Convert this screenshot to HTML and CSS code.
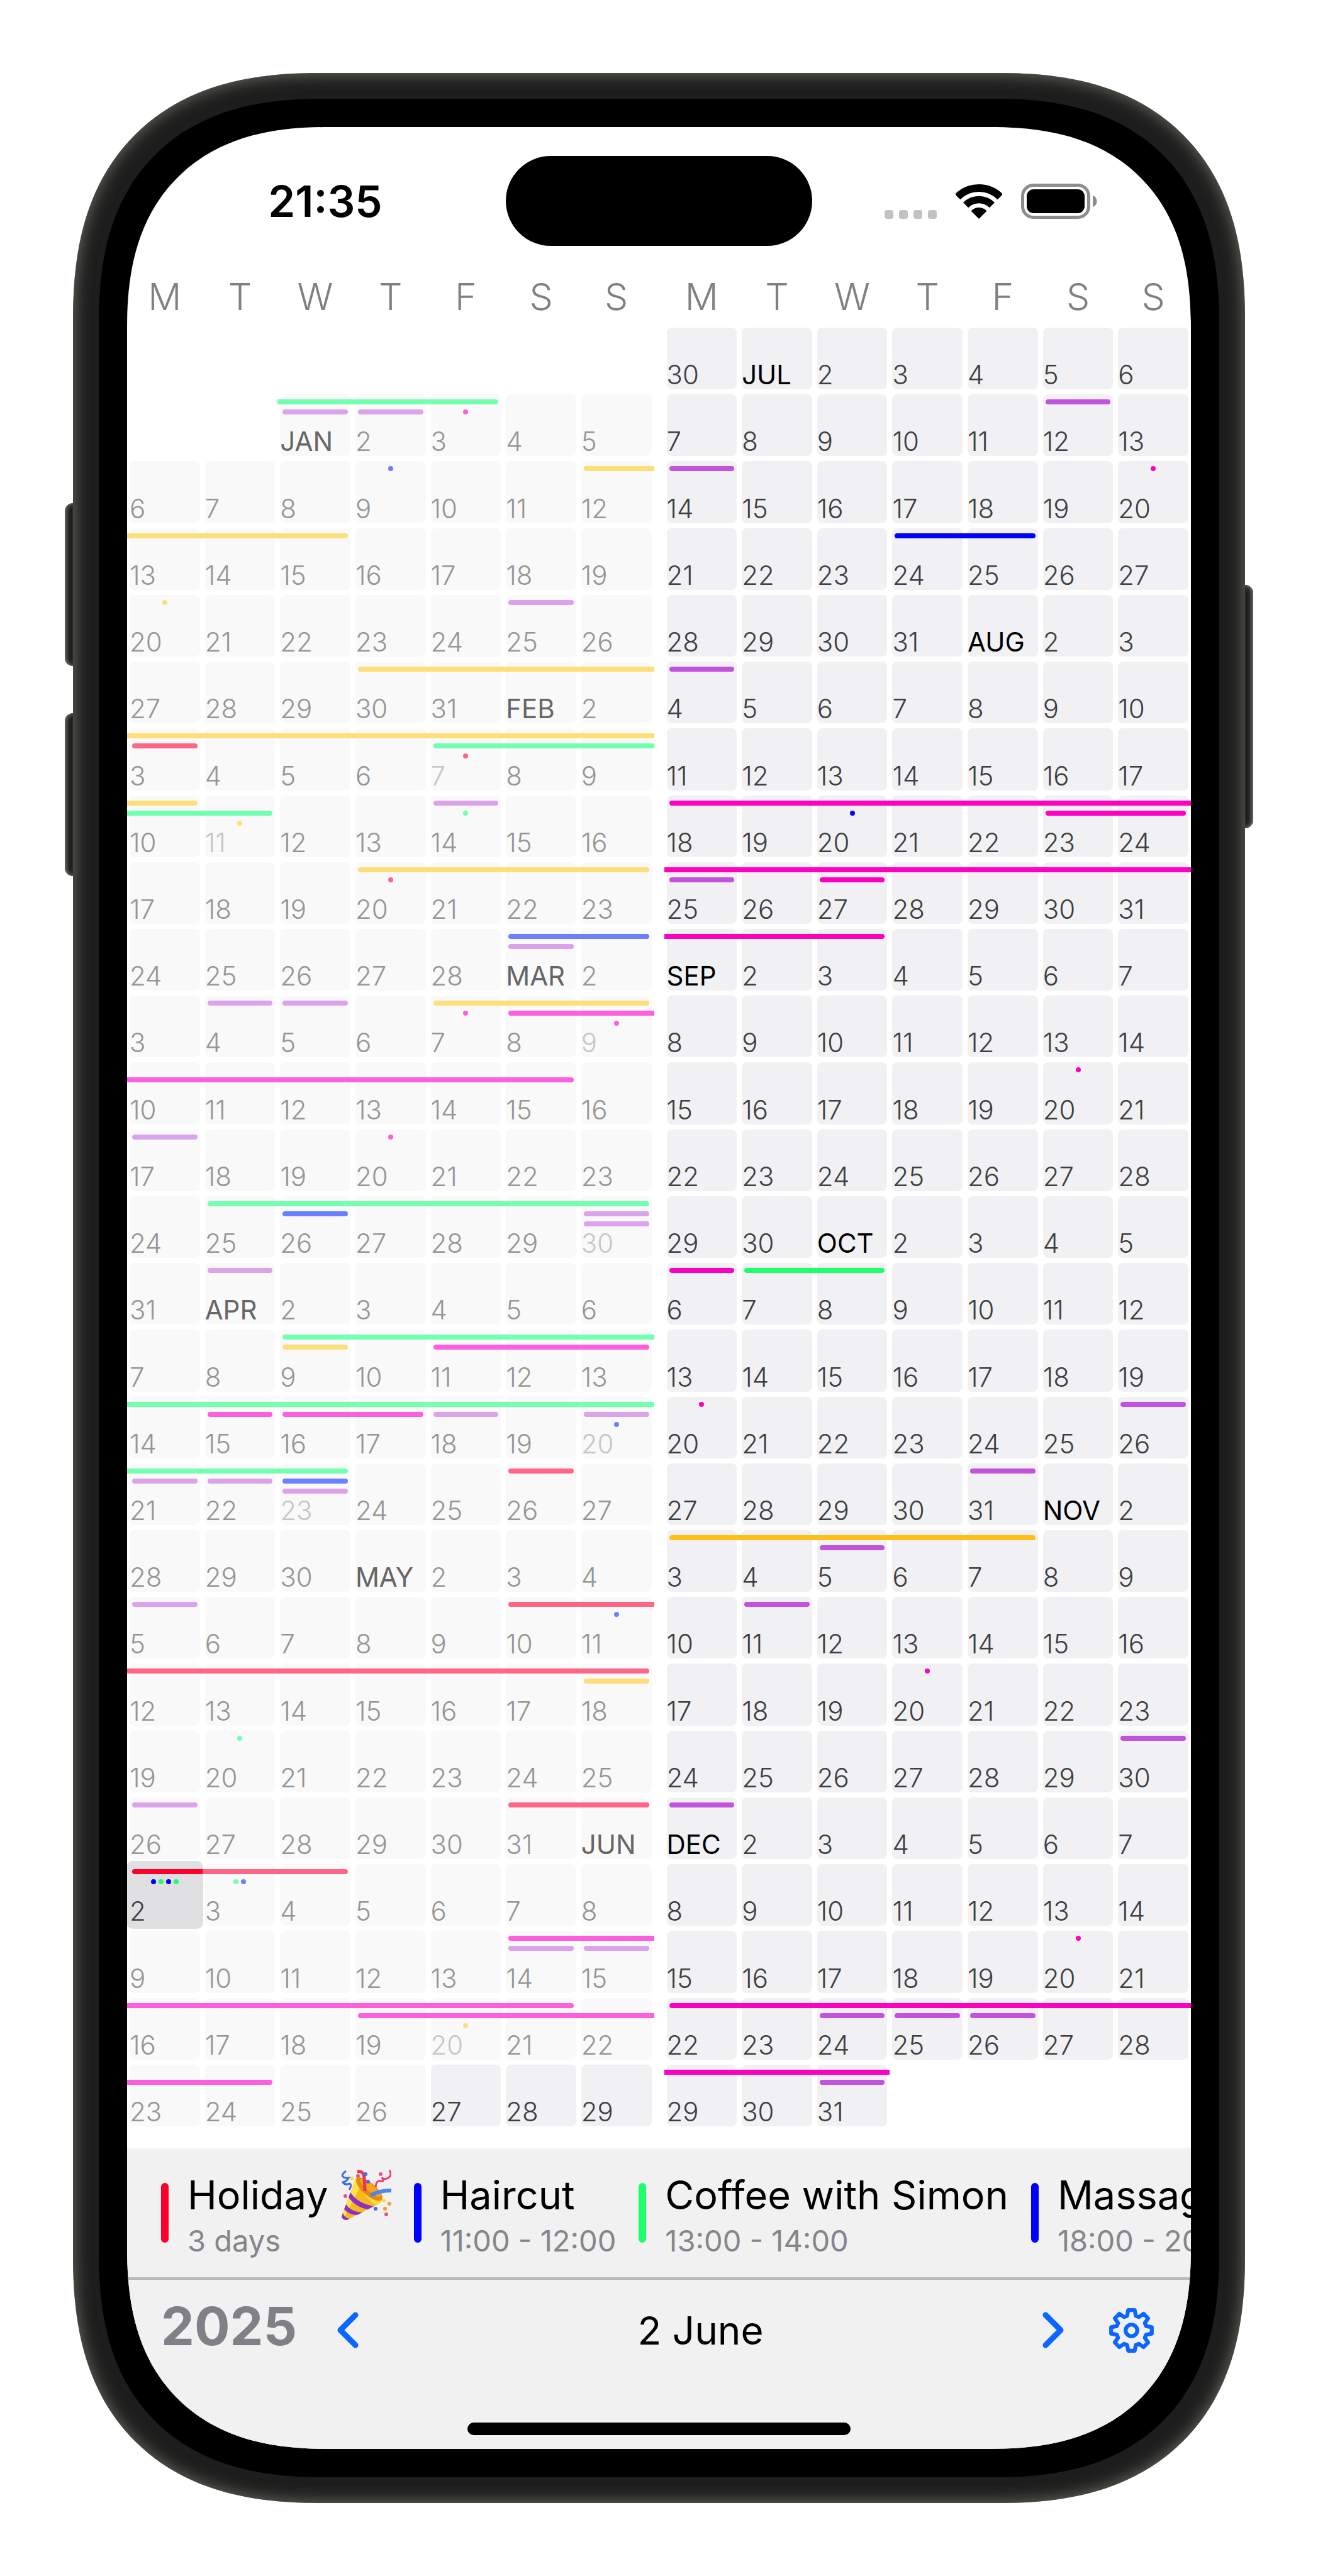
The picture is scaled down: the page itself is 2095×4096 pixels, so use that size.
FILE: index.html
```html
<!DOCTYPE html>
<html lang="en">
<head>
<meta charset="utf-8">
<meta name="viewport" content="width=device-width, initial-scale=1">
<title>Year calendar</title>
<link rel="stylesheet" href="styles.css">
</head>
<body>
<main class="phone">
  <span class="side-key volume-up"></span>
  <span class="side-key volume-down"></span>
  <span class="side-key power"></span>
  <div class="bezel">
    <div class="screen">
      <header class="status-bar">
        <time class="clock">21:35</time>
        <span class="island"></span>
        <div class="status-icons">
          <span class="signal"><i></i><i></i><i></i><i></i></span>
          <svg class="wifi" viewBox="0 0 74 55" role="img" aria-label="Wi-Fi">
            <path d="M3.1 20.1A48 48 0 0 1 70.9 20.1" fill="none" stroke="#000" stroke-width="12"/>
            <path d="M16.1 33.1A29.5 29.5 0 0 1 57.9 33.1" fill="none" stroke="#000" stroke-width="11.5"/>
            <path d="M26 42.5A16 16 0 0 1 48 42.5L37 53.5Z" stroke="#000" stroke-width="2" stroke-linejoin="round"/>
          </svg>
          <svg class="battery" viewBox="0 0 121 56" role="img" aria-label="Battery full">
            <rect x="2.5" y="2.5" width="105" height="51" rx="17" fill="none" stroke="#8d8d8d" stroke-width="5"/>
            <rect x="9" y="9" width="92" height="38" rx="11"/>
            <path d="M114 19C118 20 120.500 24 120.500 28S118 36 114 37Z" fill="#8d8d8d"/>
          </svg>
        </div>
      </header>

      <section class="year" aria-label="2025">
        <table class="half" id="first-half">
          <thead><tr><th>M</th><th>T</th><th>W</th><th>T</th><th>F</th><th>S</th><th>S</th></tr></thead>
          <tbody></tbody>
        </table>
        <table class="half" id="second-half">
          <thead><tr><th>M</th><th>T</th><th>W</th><th>T</th><th>F</th><th>S</th><th>S</th></tr></thead>
          <tbody></tbody>
        </table>
      </section>

      <ul class="agenda">
        <li class="event">
          <span class="accent red"></span>
          <div>
            <h2>Holiday<svg class="popper" viewBox="0 0 80 80" role="img" aria-label="party popper">
              <path d="M23 14C16 34 8 55 1 74Q2 81 11 79Q38 66 62 53Q68 48 61 38Q48 18 31 13Q26 11 23 14Z" fill="#f5b91f"/>
              <path d="M23 14C16 34 8 55 1 74L4 78Q18 52 32 24Z" fill="#ffe04a"/>
              <path d="M30 25Q40 48 56 56L62 53Q66 50 64 46Q44 46 30 25Z" fill="#ffd83c"/>
              <ellipse cx="45" cy="31" rx="26" ry="10" transform="rotate(40 45 31)" fill="#e58a0c"/>
              <ellipse cx="47" cy="29" rx="21" ry="6" transform="rotate(40 47 29)" fill="#f7a51c"/>
              <path d="M15 36L12 44Q24 60 43 63L52 58Q27 54 15 36Z" fill="#8a2fc9"/>
              <path d="M8 55L5 63Q13 72 26 72L34 68Q16 67 8 55Z" fill="#8a2fc9"/>
              <path d="M3 69L1 75Q3 80 9 80L14 78Q6 77 3 69Z" fill="#8a2fc9"/>
              <path d="M26 3Q36 1 37 13T38 34" fill="none" stroke="#f0304f" stroke-width="5"/>
              <path d="M8 2Q0 8 3 11T12 13Q9 19 3 20Q6 25 14 22Q18 24 13 32" fill="none" stroke="#3a6bea" stroke-width="3"/>
              <path d="M77 1Q82 9 75 13T65 12Q70 20 63 18T55 28" fill="none" stroke="#ef3c6c" stroke-width="3"/>
              <path d="M47 41Q60 33 80 33" fill="none" stroke="#4b86f0" stroke-width="6"/>
              <g fill="#ffd93b"><circle cx="17" cy="14" r="3"/><circle cx="68" cy="49" r="3"/></g>
              <g fill="#f59a2d"><circle cx="77" cy="54" r="3"/><circle cx="70" cy="62" r="3"/></g>
              <g fill="#3a6bea"><circle cx="39" cy="7" r="3"/><circle cx="43" cy="19" r="3"/><circle cx="55" cy="62" r="3"/></g>
              <g fill="#ef4f83"><circle cx="7" cy="42" r="3"/><circle cx="27" cy="10" r="3"/><circle cx="63" cy="7" r="3"/><circle cx="72" cy="71" r="3"/></g>
            </svg></h2>
            <p>3 days</p>
          </div>
        </li>
        <li class="event">
          <span class="accent blue"></span>
          <div><h2>Haircut</h2><p>11:00 - 12:00</p></div>
        </li>
        <li class="event">
          <span class="accent green"></span>
          <div><h2>Coffee with Simon</h2><p>13:00 - 14:00</p></div>
        </li>
        <li class="event">
          <span class="accent blue"></span>
          <div><h2>Massage</h2><p>18:00 - 20:00</p></div>
        </li>
      </ul>

      <footer class="toolbar">
        <div class="controls">
          <button class="year-button" type="button">2025</button>
          <button class="icon-button" type="button" aria-label="Previous day">
            <svg class="chevron" viewBox="0 0 34 58"><path d="M29 5L5 29L29 53"/></svg>
          </button>
          <h1 class="current">2 June</h1>
          <button class="icon-button" type="button" aria-label="Next day">
            <svg class="chevron" viewBox="0 0 34 58"><path d="M5 5L29 29L5 53"/></svg>
          </button>
          <button class="icon-button settings" type="button" aria-label="Settings">
            <svg class="gear" viewBox="-165 -165 330 330">
              <path d="M-32-108L-24-150H24L32-108L54-99L89-123L123-89L99-54L108-32L150-24V24L108 32L99 54L123 89L89 123L54 99L32 108L24 150H-24L-32 108L-54 99L-89 123L-123 89L-99 54L-108 32L-150 24V-24L-108-32L-99-54L-123-89L-89-123L-54-99Z"/>
              <circle r="43"/>
            </svg>
          </button>
        </div>
        <span class="home-indicator"></span>
      </footer>
    </div>
  </div>
</main>
<script src="calendar.js"></script>
</body>
</html>
```
FILE: styles.css
```css
*,
*::before,
*::after {
  box-sizing: border-box;
}

:root {
  --red: #ff002b;
  --blue: #0000ff;
  --green: #1fff6b;
  --yellow: #ffbf17;
  --purple: #c153dc;
  --magenta: #ff00c0;
  --tint: #0a66ff;
}

body {
  margin: 0;
  min-height: 100vh;
  padding: 116px;
  display: flex;
  background: #fff;
  color: #000;
  font-family: Inter, "Liberation Sans", sans-serif;
}

h1, h2, p, ul {
  margin: 0;
  padding: 0;
}

button {
  margin: 0;
  padding: 0;
  border: 0;
  background: none;
  color: inherit;
  font: inherit;
}

/* Device frame */
.phone {
  position: relative;
  flex: 1;
  min-width: 0;
  display: flex;
  padding: 41px;
  border-radius: 333px;
  background: #1d1d1d;
  box-shadow: inset 0 0 28px #74756a;
}

.bezel {
  flex: 1;
  min-width: 0;
  display: flex;
  padding: 45px;
  border-radius: 302px;
  background: #000;
}

.screen {
  flex: 1;
  min-width: 0;
  display: flex;
  flex-direction: column;
  overflow: hidden;
  border-radius: 271px;
  background: #fff;
}

@supports (corner-shape: superellipse(1.27)) {
  .phone, .bezel, .screen {
    corner-shape: superellipse(1.27);
  }
  .phone { border-radius: 394px; }
  .bezel { border-radius: 358px; }
  .screen { border-radius: 321px; }
}

.side-key {
  position: absolute;
  left: -13px;
  width: 13px;
  height: 259px;
  border-radius: 13px 0 0 13px;
  background: #1d1d1d;
  box-shadow: inset 3px 0 6px #74756a;
}

.volume-up { top: 684px; }
.volume-down { top: 1018px; }

.power {
  top: 814px;
  left: auto;
  right: -13px;
  height: 387px;
  border-radius: 0 13px 13px 0;
  box-shadow: inset -3px 0 6px #74756a;
}

/* Status bar */
.status-bar {
  display: grid;
  grid-template-columns: 1fr 487px 1fr;
  align-items: center;
  padding-top: 46px;
}

.clock {
  padding-left: 28px;
  text-align: center;
  font-size: 69px;
  font-weight: 600;
}

.island {
  height: 143px;
  border-radius: 72px;
  background: #000;
}

.status-icons {
  display: flex;
  justify-content: center;
  align-items: flex-end;
  gap: 30px;
  padding-right: 34px;
}

.signal {
  display: flex;
  gap: 9px;
}

.signal i {
  width: 14px;
  height: 14px;
  border-radius: 4px;
  background: #c2c2c2;
}

.wifi {
  width: 74px;
  height: 55px;
}

.battery {
  width: 121px;
  height: 56px;
}

/* Year grid */
.year {
  flex: 1;
  display: grid;
  grid-template-columns: 1fr 1fr;
  gap: 16px;
  padding-bottom: 31px;
}

.half {
  display: flex;
  flex-direction: column;
  min-width: 0;
}

.half thead {
  display: block;
  padding: 45px 0 9px;
}

.half tr {
  display: grid;
  grid-template-columns: repeat(7, minmax(0, 1fr));
}

.half th {
  padding: 0;
  color: #7f7f84;
  font-size: 59px;
  font-weight: 300;
  line-height: 72px;
  text-align: center;
}

.half tbody {
  flex: 1;
  display: grid;
  grid-template-rows: repeat(27, minmax(80px, 1fr));
}

.half td {
  display: grid;
  padding: 0;
}

.day {
  grid-area: 1 / 1;
  display: flex;
  flex-direction: column;
  justify-content: flex-end;
  align-items: flex-start;
  margin: 4px;
  padding: 0 0 3px;
  border-radius: 8px;
  background: #f1f1f4;
  color: #3f3f41;
  font-size: 42px;
  font-weight: 300;
  line-height: 40px;
}

.day.month {
  color: #000;
  font-weight: 400;
}

.past .day {
  background: #f9f9f9;
  color: #969696;
}

.past .day.month { color: #666; }
.past .day.crowded { color: #c6c6c6; }

.selected .day {
  margin: -1px;
  padding: 0 5px 8px;
  border-radius: 10px;
  background: #e0e0e2;
}

.marks {
  grid-area: 1 / 1;
  z-index: 1;
  display: flex;
  flex-direction: column;
  gap: 8px;
  padding-top: 12px;
  pointer-events: none;
}

.slot {
  height: 8px;
  display: flex;
  justify-content: center;
  gap: 4px;
}

.bar {
  flex: 1;
}

.bar.starts {
  margin-left: 8px;
  border-top-left-radius: 4px;
  border-bottom-left-radius: 4px;
}

.bar.ends {
  margin-right: 8px;
  border-top-right-radius: 4px;
  border-bottom-right-radius: 4px;
}

.dot {
  width: 8px;
  border-radius: 4px;
}

.red { background: var(--red); }
.blue { background: var(--blue); }
.green { background: var(--green); }
.yellow { background: var(--yellow); }
.purple { background: var(--purple); }
.magenta { background: var(--magenta); }

.past {
  --red: #ff6585;
  --blue: #6b80ff;
  --green: #72ffb0;
  --yellow: #fddf79;
  --purple: #dba3ea;
  --magenta: #fd5fdf;
}

/* Events of the selected day */
.agenda {
  display: flex;
  align-items: center;
  gap: 36px;
  height: 205px;
  padding-left: 54px;
  overflow: hidden;
  background: #f1f1f1;
  list-style: none;
}

.event {
  flex: none;
  display: flex;
  align-items: center;
  gap: 30px;
  white-space: nowrap;
}

.accent {
  width: 12px;
  height: 95px;
  border-radius: 6px;
}

.event h2 {
  font-size: 63px;
  font-weight: 400;
  line-height: 88px;
}

.event p {
  color: #85858a;
  font-size: 47px;
  line-height: 58px;
}

.popper {
  width: 80px;
  height: 80px;
  margin-left: 20px;
  vertical-align: -17px;
}

/* Bottom bar */
.toolbar {
  display: flex;
  flex-direction: column;
  align-items: center;
  justify-content: space-between;
  height: 273px;
  padding-bottom: 22px;
  border-top: 4px solid #b7b7b7;
  background: #f1f1f1;
}

.controls {
  align-self: stretch;
  display: flex;
  align-items: center;
  height: 160px;
  padding: 0 59px 0 54px;
  gap: 64px;
}

.year-button {
  padding-bottom: 14px;
  color: #808086;
  font-size: 84px;
  font-weight: 700;
}

.icon-button {
  display: flex;
}

.icon-button svg {
  fill: none;
  stroke: var(--tint);
  stroke-linecap: round;
  stroke-linejoin: round;
}

.settings {
  padding-left: 8px;
}

.chevron {
  width: 34px;
  height: 58px;
  stroke-width: 9;
}

.gear {
  width: 71px;
  height: 71px;
  stroke-width: 29;
}

.current {
  flex: 1;
  font-size: 62px;
  font-weight: 400;
  text-align: center;
}

.home-indicator {
  width: 609px;
  height: 20px;
  border-radius: 10px;
  background: #000;
}
```
FILE: calendar.js
```js
const WEEKS = 27;
const MONTHS = ["JAN", "FEB", "MAR", "APR", "MAY", "JUN", "JUL", "AUG", "SEP", "OCT", "NOV", "DEC"];
const COLORS = { r: "red", b: "blue", g: "green", y: "yellow", p: "purple", m: "magenta" };
const SELECTED = Date.UTC(2025, 5, 2);
const FIRST_UPCOMING = Date.UTC(2025, 5, 27);

// Each mark is "week slot days color": days is one column or a range,
// "<" and ">" mean that the bar runs on beyond that side.
// A "." before the colors stands for short events, one dot each.
const halves = [
  {
    table: "first-half",
    monday: Date.UTC(2024, 11, 23),
    from: Date.UTC(2025, 0, 1),
    marks: `1 0 <2-4 g|1 1 2 p|1 1 3 p|1 1 4 .m|2 0 3 .b|2 0 6> y|3 0 <0-2 y|4 0 0 .y|4 0 5 p|
      5 0 3-6> y|6 0 <0-6> y|6 1 0 r|6 1 4-6> g|6 2 4 .r|7 0 <0 y|7 1 <0-1 g|7 2 1 .y|7 0 4 p|7 1 4 .g|
      8 0 3-6 y|8 1 3 .r|9 0 5-6 b|9 1 5 p|10 0 1 p|10 0 2 p|10 0 4-6 y|10 1 4 .m|10 1 5-6> m|10 2 6 .m|
      11 1 <0-5 m|12 0 0 p|12 0 3 .m|13 0 1-6 g|13 1 2 b|13 1 6 p|13 2 6 p|14 0 1 p|
      15 0 2-6> g|15 1 2 y|15 1 4-6 m|16 0 <0-6> g|16 1 1 m|16 1 2-3 m|16 1 4 p|16 1 6 p|16 2 6 .b|
      17 0 <0-2 g|17 1 0 p|17 1 1 p|17 1 2 b|17 2 2 p|17 0 5 r|19 0 0 p|19 0 5-6> r|19 1 6 .b|
      20 0 <0-6 r|20 1 6 y|21 0 1 .g|22 0 0 p|22 0 5-6 r|23 0 0-2 r|23 1 0 .bgbg|23 1 1 .gb|
      24 0 5-6> m|24 1 5 p|24 1 6 p|25 0 <0-5 m|25 1 3-6> m|25 2 4 .y|26 1 <0-1 m`
  },
  {
    table: "second-half",
    monday: Date.UTC(2025, 5, 30),
    from: Date.UTC(2025, 5, 30),
    marks: `1 0 5 p|2 0 0 p|2 0 6 .m|3 0 3-4 b|5 0 0 p|7 0 0-6> m|7 1 2 .b|7 1 5-6 m|
      8 0 <0-6> m|8 1 0 p|8 1 2 m|9 0 <0-2 m|11 0 5 .m|14 0 0 m|14 0 1-2 g|16 0 0 .m|16 0 6 p|
      17 0 4 p|18 0 0-4 y|18 1 2 p|19 0 1 p|20 0 3 .m|21 0 6 p|22 0 0 p|24 0 5 .m|
      25 0 0-6> m|25 1 2 p|25 1 3 p|25 1 4 p|26 0 <0-2> m|26 1 2 p`
  }
];

function placeMarks(text) {
  const cells = {};
  for (const entry of text.split("|")) {
    const [week, slot, days, color] = entry.trim().split(" ");
    const [first, last = first] = days.replace(/[<>]/g, "").split("-");
    for (let d = +first; d <= +last; d++) {
      const slots = (cells[week + ":" + d] ??= []);
      if (color[0] === ".") {
        slots[slot] = [...color.slice(1)].map(c => `<i class="dot ${COLORS[c]}"></i>`).join("");
      } else {
        const starts = d === +first && days[0] !== "<" ? " starts" : "";
        const ends = d === +last && !days.endsWith(">") ? " ends" : "";
        slots[slot] = `<i class="bar ${COLORS[color]}${starts}${ends}"></i>`;
      }
    }
  }
  return cells;
}

for (const half of halves) {
  const cells = placeMarks(half.marks);
  let html = "";
  for (let week = 0; week < WEEKS; week++) {
    html += "<tr>";
    for (let d = 0; d < 7; d++) {
      const time = half.monday + (week * 7 + d) * 86400000;
      const date = new Date(time);
      if (time < half.from || date.getUTCFullYear() !== 2025) {
        html += "<td></td>";
        continue;
      }
      const slots = cells[week + ":" + d] || [];
      const first = date.getUTCDate() === 1;
      const state = time === SELECTED ? "selected" : time < FIRST_UPCOMING ? "past" : "";
      const kind = (first ? " month" : "") + (slots.length > 2 ? " crowded" : "");
      const label = first ? MONTHS[date.getUTCMonth()] : date.getUTCDate();
      const marks = Array.from(slots, s => `<div class="slot">${s || ""}</div>`).join("");
      html += `<td class="${state}"><button type="button" class="day${kind}">${label}</button>` +
        (marks ? `<div class="marks">${marks}</div>` : "") + "</td>";
    }
    html += "</tr>";
  }
  document.querySelector(`#${half.table} tbody`).innerHTML = html;
}
```
